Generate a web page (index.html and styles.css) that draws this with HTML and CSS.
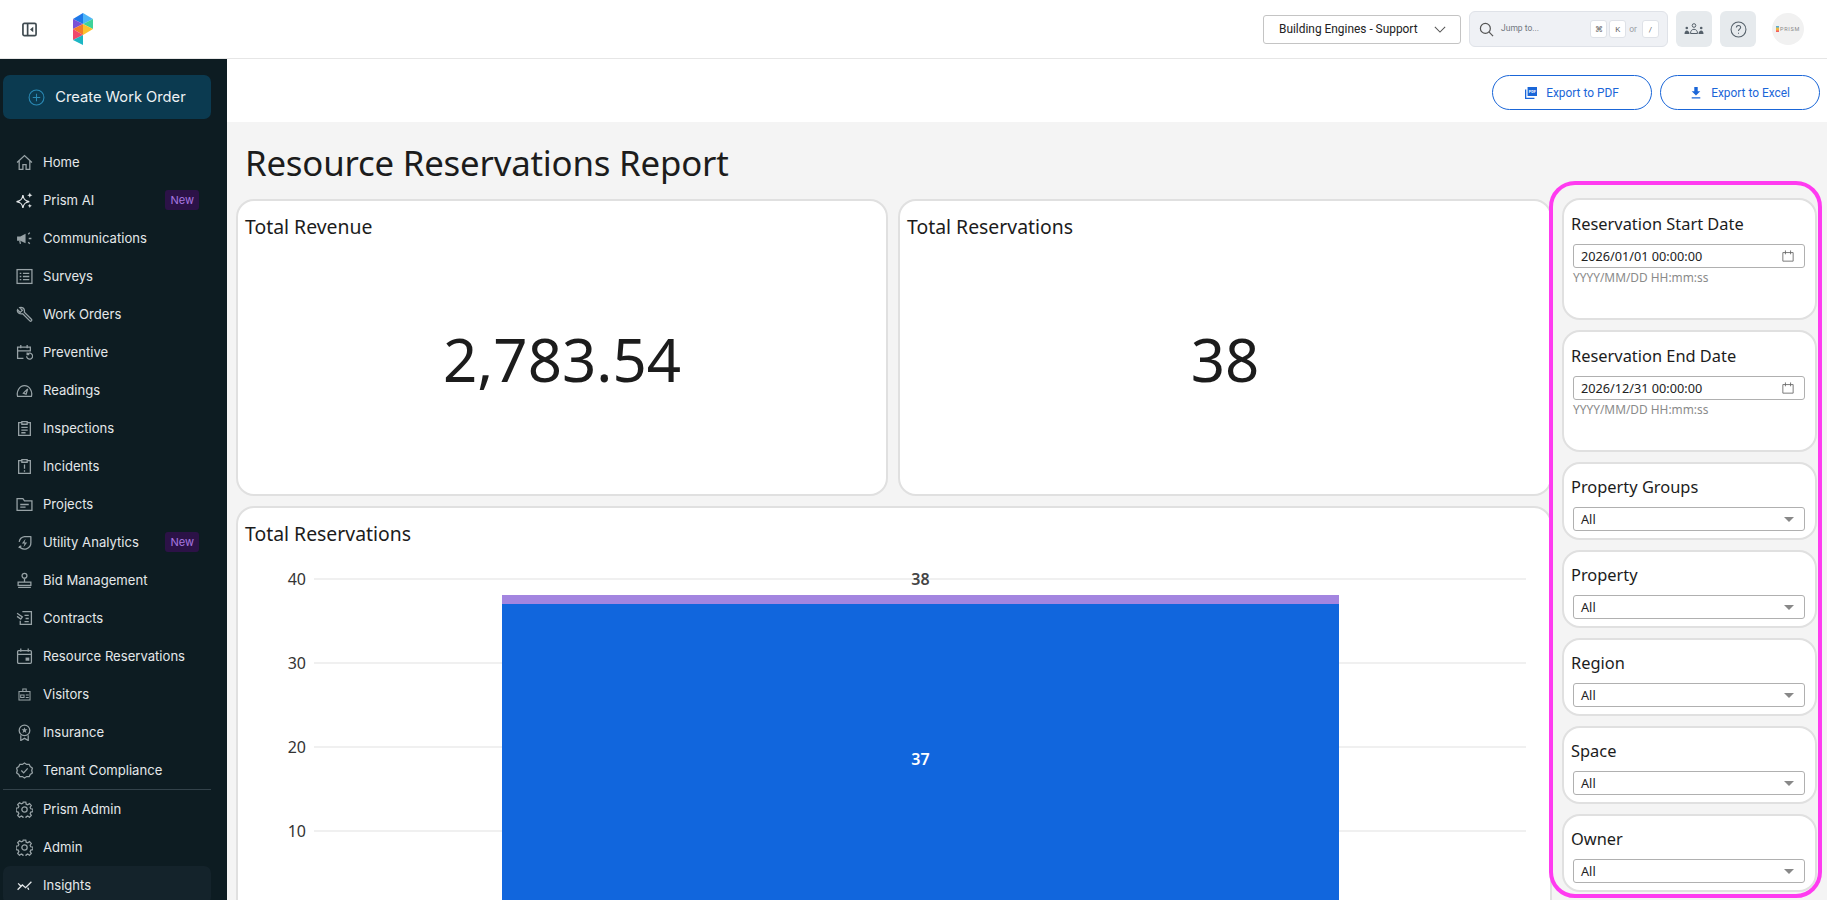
FILE: index.html
```html
<!DOCTYPE html>
<html lang="en">
<head>
<meta charset="utf-8">
<title>Resource Reservations Report</title>
<link rel="stylesheet" href="styles.css">
</head>
<body>
<header class="topbar">
  <svg class="toggle" viewBox="0 0 16 16"><rect x="1" y="1.500" width="14" height="13" rx="1.500"/><path d="M6 1.500v13"/><path class="solid" d="M12 5v6L8.500 8z"/></svg>
  <svg class="logo" viewBox="0 0 20 32">
    <path fill="#1e78e8" d="M0 6 10 0v11z"/><path fill="#4db5f8" d="M10 0l10 6-10 5z"/>
    <path fill="#3ed29a" d="M10 11 20 6v10z"/><path fill="#7b52d6" d="M0 6v10l10-5z"/>
    <path fill="#f47b2a" d="M0 16l10-5 0 11z"/><path fill="#fcc22e" d="M10 11l10 5-10 6z"/>
    <path fill="#f0496c" d="M0 16v11l10-5z"/><path fill="#1cb6c4" d="M0 27l10-5v10z"/>
  </svg>
  <div class="top-tools">
    <div class="tenant"><span>Building Engines - Support</span><svg class="chev" viewBox="0 0 14 8"><path d="M1 1l6 6 6-6"/></svg></div>
    <div class="jump">
      <svg class="search" viewBox="0 0 16 16"><circle cx="6.800" cy="6.800" r="5.300"/><path d="M10.800 10.800 15 15"/></svg>
      <span class="jump-label">Jump to...</span>
      <kbd>⌘</kbd><kbd>K</kbd><span class="or">or</span><kbd>/</kbd>
    </div>
    <button class="tool"><svg class="people" viewBox="0 0 20 12"><circle class="line" cx="10" cy="2.500" r="1.800"/><path class="line" d="M6.500 10.500c0-2.800 1.500-4.200 3.500-4.200s3.500 1.400 3.500 4.200z"/><circle cx="2.800" cy="5" r="1.300"/><path d="M.5 11c0-2 1-3.500 2.300-3.500S5.500 9 5.500 11z"/><circle cx="17.200" cy="5" r="1.300"/><path d="M14.500 11c0-2 1.400-3.500 2.700-3.500S19.500 9 19.500 11z"/></svg></button>
    <button class="tool"><svg class="help" viewBox="0 0 16 16"><circle cx="8" cy="8" r="7"/><path d="M6 6.200c0-1.300 1-2 2-2s2 .7 2 1.900c0 1.600-2 1.600-2 3.300"/><path d="M8 11v1"/></svg></button>
    <div class="avatar"><i class="avatar-mark"></i><span>PRISM</span></div>
  </div>
</header>

<div class="shell">
  <nav class="sidebar">
    <button class="create"><svg viewBox="0 0 16 16"><circle cx="8" cy="8" r="7"/><path d="M8 4.500v7M4.500 8h7"/></svg><span>Create Work Order</span></button>
    <ul class="nav">
      <li><svg viewBox="0 0 16 16"><path d="M1 8 8 1.500 15 8M3 6.500V14.500h3.500V10h3v4.500H13V6.500"/></svg><span>Home</span></li>
      <li class="bright"><svg viewBox="0 0 16 16"><path d="M6.500 3c.6 4 2 5.400 6 6-4 .6-5.400 2-6 6-.6-4-2-5.400-6-6 4-.6 5.400-2 6-6z"/><path class="solid" d="M13 .5l.7 1.800 1.800.7-1.800.7-.7 1.800-.7-1.800-1.800-.7 1.800-.7zM13 11l.6 1.400 1.400.6-1.400.6-.6 1.400-.6-1.400-1.400-.6 1.400-.6z"/></svg><span>Prism AI</span><em>New</em></li>
      <li><svg viewBox="0 0 16 16"><path class="solid" d="M1 6h3l5-2.500v9L4 10H1z"/><path d="M3.500 10l.7 3"/><path d="M11.500 4l1.500-1.500M12 8h2.500M11.500 11.500l1.500 1.500"/></svg><span>Communications</span></li>
      <li><svg viewBox="0 0 16 16"><rect x="1" y="1.500" width="14" height="13"/><path d="M6.500 5H12.500M6.500 8H12.500M6.500 11H12.500M3.500 5H5M3.500 8H5M3.500 11H5"/></svg><span>Surveys</span></li>
      <li><svg viewBox="0 0 16 16"><path d="M1.500 3.500 4 6l2-2-2.500-2.500c2-.8 4.500.5 4.500 3 0 .5 0 .9-.2 1.300l6.700 6.700c1 1-.5 2.500-1.500 1.500L6.300 7.300C3.500 8 .5 6 1.500 3.500z"/></svg><span>Work Orders</span></li>
      <li><svg viewBox="0 0 16 16"><path d="M7 13.500H1.500V3h12v4M1.500 6.500h12M4.500 1v3M10.500 1v3"/><path d="M10 11.500a2.800 2.800 0 1 0 1-2.200M10.500 8v2H12.500"/></svg><span>Preventive</span></li>
      <li><svg viewBox="0 0 16 16"><path d="M1.500 13.500C.2 9 3.200 3.500 8 3.500s7.800 5.500 6.500 10z"/><path d="M7 10.500l4-4-1.500 5z"/></svg><span>Readings</span></li>
      <li><svg viewBox="0 0 16 16"><path d="M5.500 2.500h-3v12h11v-12h-3M5.500 1.500h5v2.500h-5zM5 7h6M5 9.500h6M5 12h4"/></svg><span>Inspections</span></li>
      <li><svg viewBox="0 0 16 16"><path d="M5.500 2.500h-3v12h11v-12h-3M5.500 1.500h5v2.500h-5zM8 6v4M8 11.500v1.500"/></svg><span>Incidents</span></li>
      <li><svg viewBox="0 0 16 16"><path d="M1 13.500v-11h5.500l1.500 2h7v9zM4 8H12M4 10.500H9"/></svg><span>Projects</span></li>
      <li><svg viewBox="0 0 16 16"><path d="M14 2v6a6 6 0 0 1-11 3.500M2.500 13 5 11M3 7.500A6 6 0 0 1 8 2.500h6"/><path class="solid" d="M9 4.500 5.500 9H8l-1 3.500L10.500 8H8z"/></svg><span>Utility Analytics</span><em>New</em></li>
      <li><svg viewBox="0 0 16 16"><circle cx="8" cy="3.500" r="2.300"/><path d="M8 6v3.500M2 9.500h12v3H2zM2 14.500h12"/></svg><span>Bid Management</span></li>
      <li><svg viewBox="0 0 16 16"><path d="M6 1.500h8.500v12H4V10M8 5h4M9 8h3M8 11h4"/><path d="M1 3l5 3.500-1.500 2L1 6"/></svg><span>Contracts</span></li>
      <li><svg viewBox="0 0 16 16"><rect x="1.500" y="2.500" width="13" height="12" rx="1"/><path d="M1.500 6h13M4.500 .5v3M11.500 .5v3"/><path class="solid" d="M9 9h3.500v3H9z"/></svg><span>Resource Reservations</span></li>
      <li><svg class="small" viewBox="0 0 16 16"><rect x="1.500" y="4.500" width="13" height="10"/><rect x="6" y="1.500" width="4" height="3"/><path d="M7.500 8.500H3.500v3h4zM9.500 8.500H13M9.500 11.500H13"/></svg><span>Visitors</span></li>
      <li><svg viewBox="0 0 16 16"><circle cx="8" cy="6" r="5"/><path d="M4.500 10.500V15.500l3.500-2 3.500 2v-5"/><path class="solid" d="M8 3l.8 2h2l-1.600 1.300.6 2.100L8 7.200 6.200 8.400l.6-2.100L5.200 5h2z"/></svg><span>Insurance</span></li>
      <li><svg viewBox="0 0 16 16"><path d="M8 1l2 1.300 2.400-.1 1 2.100 2 1.400-.6 2.300.6 2.300-2 1.400-1 2.100-2.400-.1L8 15l-2-1.300-2.400.1-1-2.100-2-1.400.6-2.300L.6 5.700l2-1.400 1-2.100 2.400.1z"/><path d="M5 8l2.200 2.200L11 6"/></svg><span>Tenant Compliance</span></li>
    </ul>
    <hr class="nav-rule">
    <ul class="nav">
      <li><svg viewBox="0 0 16 16"><circle cx="8" cy="8" r="2.500"/><path d="M6.800 1h2.400l.4 2 1.400.6 1.700-1.100 1.700 1.700-1.100 1.700.6 1.400 2 .4v2.400l-2 .4-.6 1.400 1.100 1.700-1.700 1.700-1.700-1.100-1.400.6-.4 2H6.800l-.4-2-1.400-.6-1.700 1.100-1.700-1.700 1.100-1.700-.6-1.400-2-.4V6.800l2-.4.6-1.400-1.100-1.700 1.700-1.700L5 2.700l1.400-.6z"/></svg><span>Prism Admin</span></li>
      <li><svg viewBox="0 0 16 16"><circle cx="8" cy="8" r="2.500"/><path d="M6.800 1h2.400l.4 2 1.400.6 1.700-1.100 1.700 1.700-1.100 1.700.6 1.400 2 .4v2.400l-2 .4-.6 1.400 1.100 1.700-1.700 1.700-1.700-1.100-1.400.6-.4 2H6.800l-.4-2-1.400-.6-1.700 1.100-1.700-1.700 1.100-1.700-.6-1.400-2-.4V6.800l2-.4.6-1.400-1.100-1.700 1.700-1.700L5 2.700l1.400-.6z"/></svg><span>Admin</span></li>
      <li class="active bright"><svg viewBox="0 0 16 16"><path d="M1.500 12 6 7.500l3 2.500L14.500 4.500"/><path d="M2 6l2.500 2.500M11 10l1 2"/></svg><span>Insights</span></li>
    </ul>
  </nav>

  <main class="main">
    <div class="actions">
      <button class="export"><svg viewBox="0 0 14 14"><path class="fill" d="M3 0h11v10.500H3z"/><path class="fill" d="M0 3h1.500v9.500H11V14H0z"/><text class="pdf-mark" x="8.500" y="7">PDF</text></svg><span>Export to PDF</span></button>
      <button class="export"><svg viewBox="0 0 12 14"><path class="fill" d="M4 0h4v5h3L6 10 1 5h3zM1 12h10v1.500H1z"/></svg><span>Export to Excel</span></button>
    </div>
    <h1 class="page-title">Resource Reservations Report</h1>
    <div class="report">
      <div class="visuals">
        <section class="card kpi"><h2>Total Revenue</h2><p class="kpi-value">2,783.54</p></section>
        <section class="card kpi"><h2>Total Reservations</h2><p class="kpi-value">38</p></section>
        <section class="card chart-card">
          <h2>Total Reservations</h2>
          <svg class="chart" viewBox="0 0 1316 400">
            <g class="grid"><path d="M78 73H1290M78 157H1290M78 241H1290M78 325H1290"/></g>
            <g class="ticks"><text x="70" y="79">40</text><text x="70" y="163">30</text><text x="70" y="247">20</text><text x="70" y="331">10</text></g>
            <rect class="bar-top" x="266" y="89" width="837" height="9"/>
            <rect class="bar-main" x="266" y="98" width="837" height="302"/>
            <text class="total" x="684.500" y="79">38</text>
            <text class="inner" x="684.500" y="259">37</text>
          </svg>
        </section>
      </div>
      <aside class="filters">
        <section class="card filter date"><h3>Reservation Start Date</h3>
          <div class="field"><span>2026/01/01 00:00:00</span><svg viewBox="0 0 14 14"><path d="M1 3h12v10H1zM4 .5V5M10 .5V5"/></svg></div>
          <p class="hint">YYYY/MM/DD HH:mm:ss</p></section>
        <section class="card filter date"><h3>Reservation End Date</h3>
          <div class="field"><span>2026/12/31 00:00:00</span><svg viewBox="0 0 14 14"><path d="M1 3h12v10H1zM4 .5V5M10 .5V5"/></svg></div>
          <p class="hint">YYYY/MM/DD HH:mm:ss</p></section>
        <section class="card filter"><h3>Property Groups</h3><div class="field"><span>All</span><i class="caret"></i></div></section>
        <section class="card filter"><h3>Property</h3><div class="field"><span>All</span><i class="caret"></i></div></section>
        <section class="card filter"><h3>Region</h3><div class="field"><span>All</span><i class="caret"></i></div></section>
        <section class="card filter"><h3>Space</h3><div class="field"><span>All</span><i class="caret"></i></div></section>
        <section class="card filter"><h3>Owner</h3><div class="field"><span>All</span><i class="caret"></i></div></section>
      </aside>
    </div>
  </main>
</div>
</body>
</html>
```

FILE: styles.css
```css
* { box-sizing: border-box; }
html, body { margin: 0; height: 100%; overflow: hidden; }
body { font-family: "Inter", "Liberation Sans", sans-serif; color: #1c1c1c; background: #fff; }
button { font: inherit; cursor: pointer; }
h1, h2, h3, p, ul { margin: 0; padding: 0; }

/* top bar */
.topbar { height: 59px; display: flex; align-items: center; padding: 0 23px 0 22px; background: #fff; border-bottom: 1px solid #e6e6e6; }
.toggle { width: 15px; height: 15px; fill: none; stroke: #3f4a50; stroke-width: 1.800; }
.toggle .solid { fill: #3f4a50; stroke: none; }
.logo { width: 20px; height: 32px; margin-left: 36px; }
.top-tools { margin-left: auto; display: flex; align-items: center; }
.tenant { width: 198px; height: 29px; display: flex; align-items: center; justify-content: space-between; padding: 0 14px 0 15px; border: 1px solid #c4c4c4; border-radius: 3px; font: 11.900px "Roboto", sans-serif; color: #222; }
.chev { width: 12px; height: 7px; fill: none; stroke: #555; stroke-width: 1.200; }
.jump { width: 199px; height: 36px; margin-left: 8px; display: flex; align-items: center; padding: 0 8px 0 9px; background: #eff1f5; border: 1px solid #dfe2e8; border-radius: 6px; }
.search { width: 15px; height: 15px; fill: none; stroke: #555; stroke-width: 1.300; }
.jump-label { margin-left: 7px; margin-right: auto; font: 8.500px "Roboto", sans-serif; color: #6f7680; position: relative; top: -1px; }
.jump kbd { width: 17px; height: 18px; margin-left: 2px; display: flex; align-items: center; justify-content: center; background: #fff; border: 1px solid #dfe2e8; border-radius: 3px; font: 8px "Roboto", sans-serif; color: #666; }
.or { margin: 0 3px 0 3px; font: 8.500px "Roboto", sans-serif; color: #9a9fa6; }
.tool { width: 36px; height: 36px; margin-left: 8px; display: flex; align-items: center; justify-content: center; border: 0; border-radius: 6px; background: #e6eaed; padding: 0; }
.people { width: 20px; height: 12px; fill: #55606a; }
.people .line { fill: none; stroke: #55606a; stroke-width: 1; }
.help { width: 17px; height: 17px; fill: none; stroke: #55606a; stroke-width: 1; }
.avatar { width: 32px; height: 32px; margin-left: 16px; display: flex; align-items: center; justify-content: center; gap: 1px; border-radius: 50%; background: #f1f1f1; font: 5.500px "Roboto", sans-serif; letter-spacing: .7px; color: #888; }
.avatar-mark { width: 3px; height: 6px; flex: none; background: linear-gradient(#3aa8f5, #fcc22e 50%, #f0496c); }

/* shell */
.shell { display: flex; height: 841px; }
.sidebar { width: 227px; flex: none; padding-top: 16px; background: #0d1c22; color: #e4e8ea; font-size: 13.100px; overflow: hidden; }
.create { width: 208px; height: 44px; margin-left: 3px; display: flex; align-items: center; justify-content: center; gap: 10px; border: 0; border-radius: 7px; background: #0b3a50; color: #eef2f4; font-size: 14.700px; }
.create svg { width: 17px; height: 17px; fill: none; stroke: #2b8ab5; stroke-width: 1; }
.nav { list-style: none; }
.sidebar > .nav:first-of-type { margin-top: 24px; }
.nav li { height: 38px; margin: 0 16px 0 3px; padding-left: 13px; display: flex; align-items: center; border-radius: 7px; }
.nav svg { width: 17px; height: 17px; flex: none; fill: none; stroke: #97a2a6; stroke-width: 1.200; }
.nav .small { transform: scale(.8); }
.nav .solid { fill: #97a2a6; stroke: none; }
.nav .bright svg { stroke: #e4e8ea; }
.nav .bright .solid { fill: #e4e8ea; }
.nav span { margin-left: 10px; white-space: nowrap; }
.nav em { margin-left: auto; margin-right: 12px; padding: 3px 5px; border-radius: 3px; background: #2c1247; color: #a878e0; font-style: normal; font-size: 11px; line-height: 14px; }
.nav-rule { height: 1px; margin: 0 16px 0 3px; border: 0; background: #33424a; }
.nav .active { background: #14232b; }

/* main */
.main { flex: 1; min-width: 0; background: #f4f4f4; overflow: hidden; font-family: "Noto Sans", sans-serif; }
.actions { height: 63px; display: flex; justify-content: flex-end; align-items: center; gap: 8px; padding: 4px 7px 0 0; background: #fff; }
.export { width: 160px; height: 35px; display: flex; align-items: center; justify-content: center; gap: 9px; background: #fff; border: 1px solid #1a66d8; border-radius: 18px; color: #1a66d8; font: 11.900px "Roboto", sans-serif; }
.export svg { width: 12px; height: 12px; }
.export .fill { fill: #1a66d8; }
.pdf-mark { font: 700 4.500px "Roboto", sans-serif; fill: #fff; text-anchor: middle; }
.page-title { height: 60px; margin-top: 11px; padding-left: 18px; font-size: 34.800px; font-weight: 400; line-height: 60px; letter-spacing: -.2px; color: #1c1c1c; }
.report { display: flex; gap: 10px; padding: 6px 10px 0 9px; align-items: flex-start; }
.visuals { width: 1316px; flex: none; display: grid; grid-template-columns: 652px 654px; gap: 10px; }
.card { background: #fff; border: 2px solid #e0e0e0; border-radius: 18px; }
.card h2 { font-size: 19.400px; font-weight: 400; line-height: 24px; color: #1c1c1c; }
.kpi { height: 297px; padding: 14px 7px 16px; display: flex; flex-direction: column; }
.kpi-value { flex: 1; display: flex; align-items: center; justify-content: center; font-size: 60px; line-height: 1; color: #1c1c1c; }
.chart-card { grid-column: span 2; height: 500px; padding: 14px 7px 0; }
.chart { display: block; width: 1316px; height: 400px; margin: -40px 0 0 -9px; }
.grid path { fill: none; stroke: #ececec; stroke-width: 1.500; }
.ticks text { font: 16px "Noto Sans", sans-serif; fill: #333; text-anchor: end; }
.bar-top { fill: #a385e0; }
.bar-main { fill: #1166dd; }
.total { font: 600 16px "Noto Sans", sans-serif; fill: #444; text-anchor: middle; }
.inner { font: 600 16px "Noto Sans", sans-serif; fill: #fff; text-anchor: middle; }

/* filters */
.filters { position: relative; width: 255px; flex: none; margin-top: -1px; display: flex; flex-direction: column; gap: 10px; }
.filters::after { content: ""; position: absolute; left: -13px; right: -5px; top: -17px; bottom: -6px; border: 4px solid #ff3bf0; border-radius: 26px; pointer-events: none; }
.filter { height: 78px; padding: 0 7px; }
.filter.date { height: 122px; }
.filter h3 { margin-top: 12px; font-size: 16.400px; font-weight: 400; line-height: 22px; color: #1c1c1c; }
.filter.date h3 { margin-top: 13px; }
.field { height: 24px; margin: 9px 3px 0 2px; display: flex; align-items: center; justify-content: space-between; padding: 0 10px 0 7px; background: #fff; border: 1px solid #b0b0b0; border-radius: 3px; font-size: 12.700px; color: #222; }
.field svg { width: 12px; height: 12px; fill: none; stroke: #666; stroke-width: 1; }
.caret { width: 0; height: 0; border-left: 5px solid transparent; border-right: 5px solid transparent; border-top: 5px solid #888; }
.hint { margin: 2px 2px 0; font-size: 11.900px; line-height: 14px; color: #8a8a8a; }
```
